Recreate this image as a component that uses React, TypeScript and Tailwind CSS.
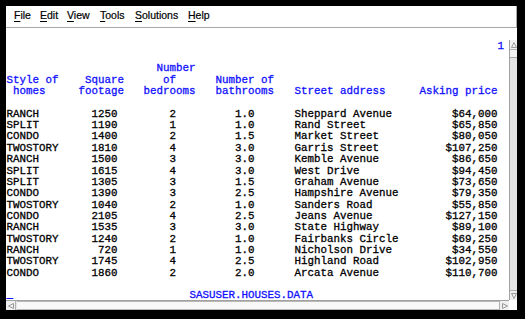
import React from "react";

const rows: [string, number, number, string, string, string][] = [
  ["RANCH", 1250, 2, "1.0", "Sheppard Avenue", "$64,000"],
  ["SPLIT", 1190, 1, "1.0", "Rand Street", "$65,850"],
  ["CONDO", 1400, 2, "1.5", "Market Street", "$80,050"],
  ["TWOSTORY", 1810, 4, "3.0", "Garris Street", "$107,250"],
  ["RANCH", 1500, 3, "3.0", "Kemble Avenue", "$86,650"],
  ["SPLIT", 1615, 4, "3.0", "West Drive", "$94,450"],
  ["SPLIT", 1305, 3, "1.5", "Graham Avenue", "$73,650"],
  ["CONDO", 1390, 3, "2.5", "Hampshire Avenue", "$79,350"],
  ["TWOSTORY", 1040, 2, "1.0", "Sanders Road", "$55,850"],
  ["CONDO", 2105, 4, "2.5", "Jeans Avenue", "$127,150"],
  ["RANCH", 1535, 3, "3.0", "State Highway", "$89,100"],
  ["TWOSTORY", 1240, 2, "1.0", "Fairbanks Circle", "$69,250"],
  ["RANCH", 720, 1, "1.0", "Nicholson Drive", "$34,550"],
  ["TWOSTORY", 1745, 4, "2.5", "Highland Road", "$102,950"],
  ["CONDO", 1860, 2, "2.0", "Arcata Avenue", "$110,700"],
];

type Cells = [string, string, string, string, string, string];

function Line({ cells, blue }: { cells: Cells; blue?: boolean }) {
  const c = blue ? "text-[#1010ff]" : "text-black";
  return (
    <div className={`flex h-[11.36px] leading-[11.36px] whitespace-pre ${c}`}>
      <span className="w-[72px] ml-[0.5px] shrink-0">{cells[0]}</span>
      <span className="w-[65px] shrink-0">{cells[1]}</span>
      <span className="w-[72px] shrink-0">{cells[2]}</span>
      <span className="w-[79px] shrink-0">{cells[3]}</span>
      <span className="w-[125px] shrink-0">{cells[4]}</span>
      <span className="w-[78px] shrink-0">{cells[5]}</span>
    </div>
  );
}

function Blank() {
  return <div className="h-[11.36px]" />;
}

function MenuItem({ first, rest, w }: { first: string; rest: string; w: string }) {
  return (
    <div className={`${w} shrink-0`}>
      <span className="underline underline-offset-[2px] decoration-1">{first}</span>
      {rest}
    </div>
  );
}

export default function App() {
  return (
    <div className="w-[525px] h-[319px] bg-black pl-[6px] pt-[6px] pr-[8px] pb-[9px]">
      <div className="flex flex-col h-full bg-white">
        {/* Menu bar */}
        <div
          className="h-[22px] shrink-0 flex items-center pl-[8px] pb-[1px] border-b border-r border-[#a8a8a8] text-[10.5px] text-black [-webkit-text-stroke:0.2px_black]"
          style={{ fontFamily: '"Liberation Sans", Arial, sans-serif' }}
        >
          <MenuItem first="F" rest="ile" w="w-[26px]" />
          <MenuItem first="E" rest="dit" w="w-[27px]" />
          <MenuItem first="V" rest="iew" w="w-[33px]" />
          <MenuItem first="T" rest="ools" w="w-[35px]" />
          <MenuItem first="S" rest="olutions" w="w-[53px]" />
          <MenuItem first="H" rest="elp" w="w-[40px]" />
        </div>

        {/* Body */}
        <div className="flex-1 flex min-h-0">
          <div
            className="flex-1 pt-[1.2px] text-[10.8333px] overflow-hidden [-webkit-text-stroke:0.3px_currentColor]"
            style={{ fontFamily: '"Liberation Mono", "Courier New", monospace' }}
          >
            <Blank />
            <div className="flex h-[11.36px] leading-[11.36px] whitespace-pre text-[#1010ff]">
              <span className="ml-[491.5px]">1</span>
            </div>
            <Blank />
            <Line blue cells={["", "", "  Number", "", "", ""]} />
            <Line blue cells={["Style of", " Square", "   of", "Number of", "", ""]} />
            <Line blue cells={[" homes", "footage", "bedrooms", "bathrooms", "Street address", "Asking price"]} />
            <Blank />
            {rows.map((r, i) => (
              <Line
                key={i}
                cells={[
                  r[0],
                  String(r[1]).padStart(6, " "),
                  "    " + String(r[2]),
                  "   " + r[3],
                  r[4],
                  r[5].padStart(12, " "),
                ]}
              />
            ))}
            <Blank />
            <div className="relative flex h-[11.36px] leading-[11.36px] whitespace-pre text-[#1010ff]">
              <span className="ml-[0.5px] w-[183px] shrink-0">_</span>
              <span>SASUSER.HOUSES.DATA</span>
            </div>
          </div>

          {/* Vertical scrollbar */}
          <div className="w-[8px] shrink-0 mt-[12px] flex flex-col border-l border-[#a0a0a0] bg-[#e4e4e4]">
            <div className="h-[10px] shrink-0 bg-[#f0f0f0] border-b border-[#b0b0b0] flex items-center justify-center">
              <svg width="6" height="6" viewBox="0 0 6 6">
                <path d="M3 0.5 L5.5 5.5 L0.5 5.5 Z" fill="none" stroke="#9a9a9a" strokeWidth="1" />
              </svg>
            </div>
            <div className="h-[8px] shrink-0 border-b border-[#a8a8a8] bg-[#f4f4f4]" />
            <div className="flex-1" />
            <div className="h-[10px] shrink-0 bg-[#f0f0f0] border-t border-[#b0b0b0] flex items-center justify-center">
              <svg width="6" height="6" viewBox="0 0 6 6">
                <path d="M0.5 0.5 L5.5 0.5 L3 5.5 Z" fill="none" stroke="#9a9a9a" strokeWidth="1" />
              </svg>
            </div>
          </div>
        </div>

        {/* Horizontal scrollbar */}
        <div className="h-[10px] shrink-0 flex">
          <div className="flex-1 flex border-t border-[#a0a0a0] bg-[#e4e4e4]">
            <div className="w-[10px] shrink-0 bg-[#f0f0f0] border-r border-[#b0b0b0] flex items-center justify-center">
              <svg width="6" height="6" viewBox="0 0 6 6">
                <path d="M0.5 3 L5.5 0.5 L5.5 5.5 Z" fill="none" stroke="#9a9a9a" strokeWidth="1" />
              </svg>
            </div>
            <div className="flex-1 border-y border-[#b8b8b8] bg-[#f8f8f8] ml-[1px]" />
            <div className="w-[10px] shrink-0 bg-[#f0f0f0] border-l border-[#b0b0b0] flex items-center justify-center">
              <svg width="6" height="6" viewBox="0 0 6 6">
                <path d="M5.5 3 L0.5 0.5 L0.5 5.5 Z" fill="none" stroke="#9a9a9a" strokeWidth="1" />
              </svg>
            </div>
          </div>
          <div className="w-[8px] shrink-0 bg-white" />
        </div>
      </div>
    </div>
  );
}
